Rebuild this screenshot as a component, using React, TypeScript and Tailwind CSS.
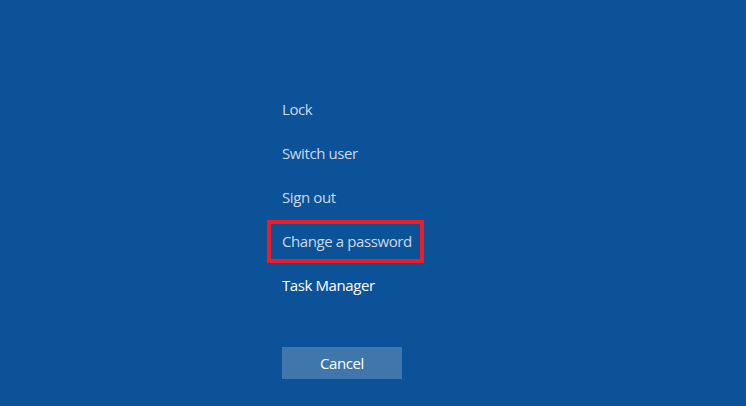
import React from 'react'

const items = ['Lock', 'Switch user', 'Sign out', 'Change a password', 'Task Manager']

export default function App() {
  return (
    <div
      className="w-[746px] h-[406px] bg-[#0c5299] overflow-hidden"
      style={{ fontFamily: '"Open Sans", "Noto Sans", sans-serif' }}
    >
      <div className="pl-[282px] pt-[87px] flex flex-col">
        {items.map(item => (
          <div key={item} className="relative h-[44px] flex items-center">
            <span
              className={
                item === 'Task Manager'
                  ? 'text-[15px] tracking-[-0.4px] text-white'
                  : 'text-[15px] tracking-[-0.4px] text-[#cbd9ea]'
              }
            >
              {item}
            </span>
            {item === 'Change a password' && (
              <div className="absolute left-[-15px] top-[1px] w-[157px] h-[43px] border-4 border-[#ee1c25]" />
            )}
          </div>
        ))}
        <button className="mt-[40px] w-[120px] h-[32px] bg-[#3f76ab] text-white text-[15px] tracking-[-0.4px] flex items-center justify-center">
          Cancel
        </button>
      </div>
    </div>
  )
}
